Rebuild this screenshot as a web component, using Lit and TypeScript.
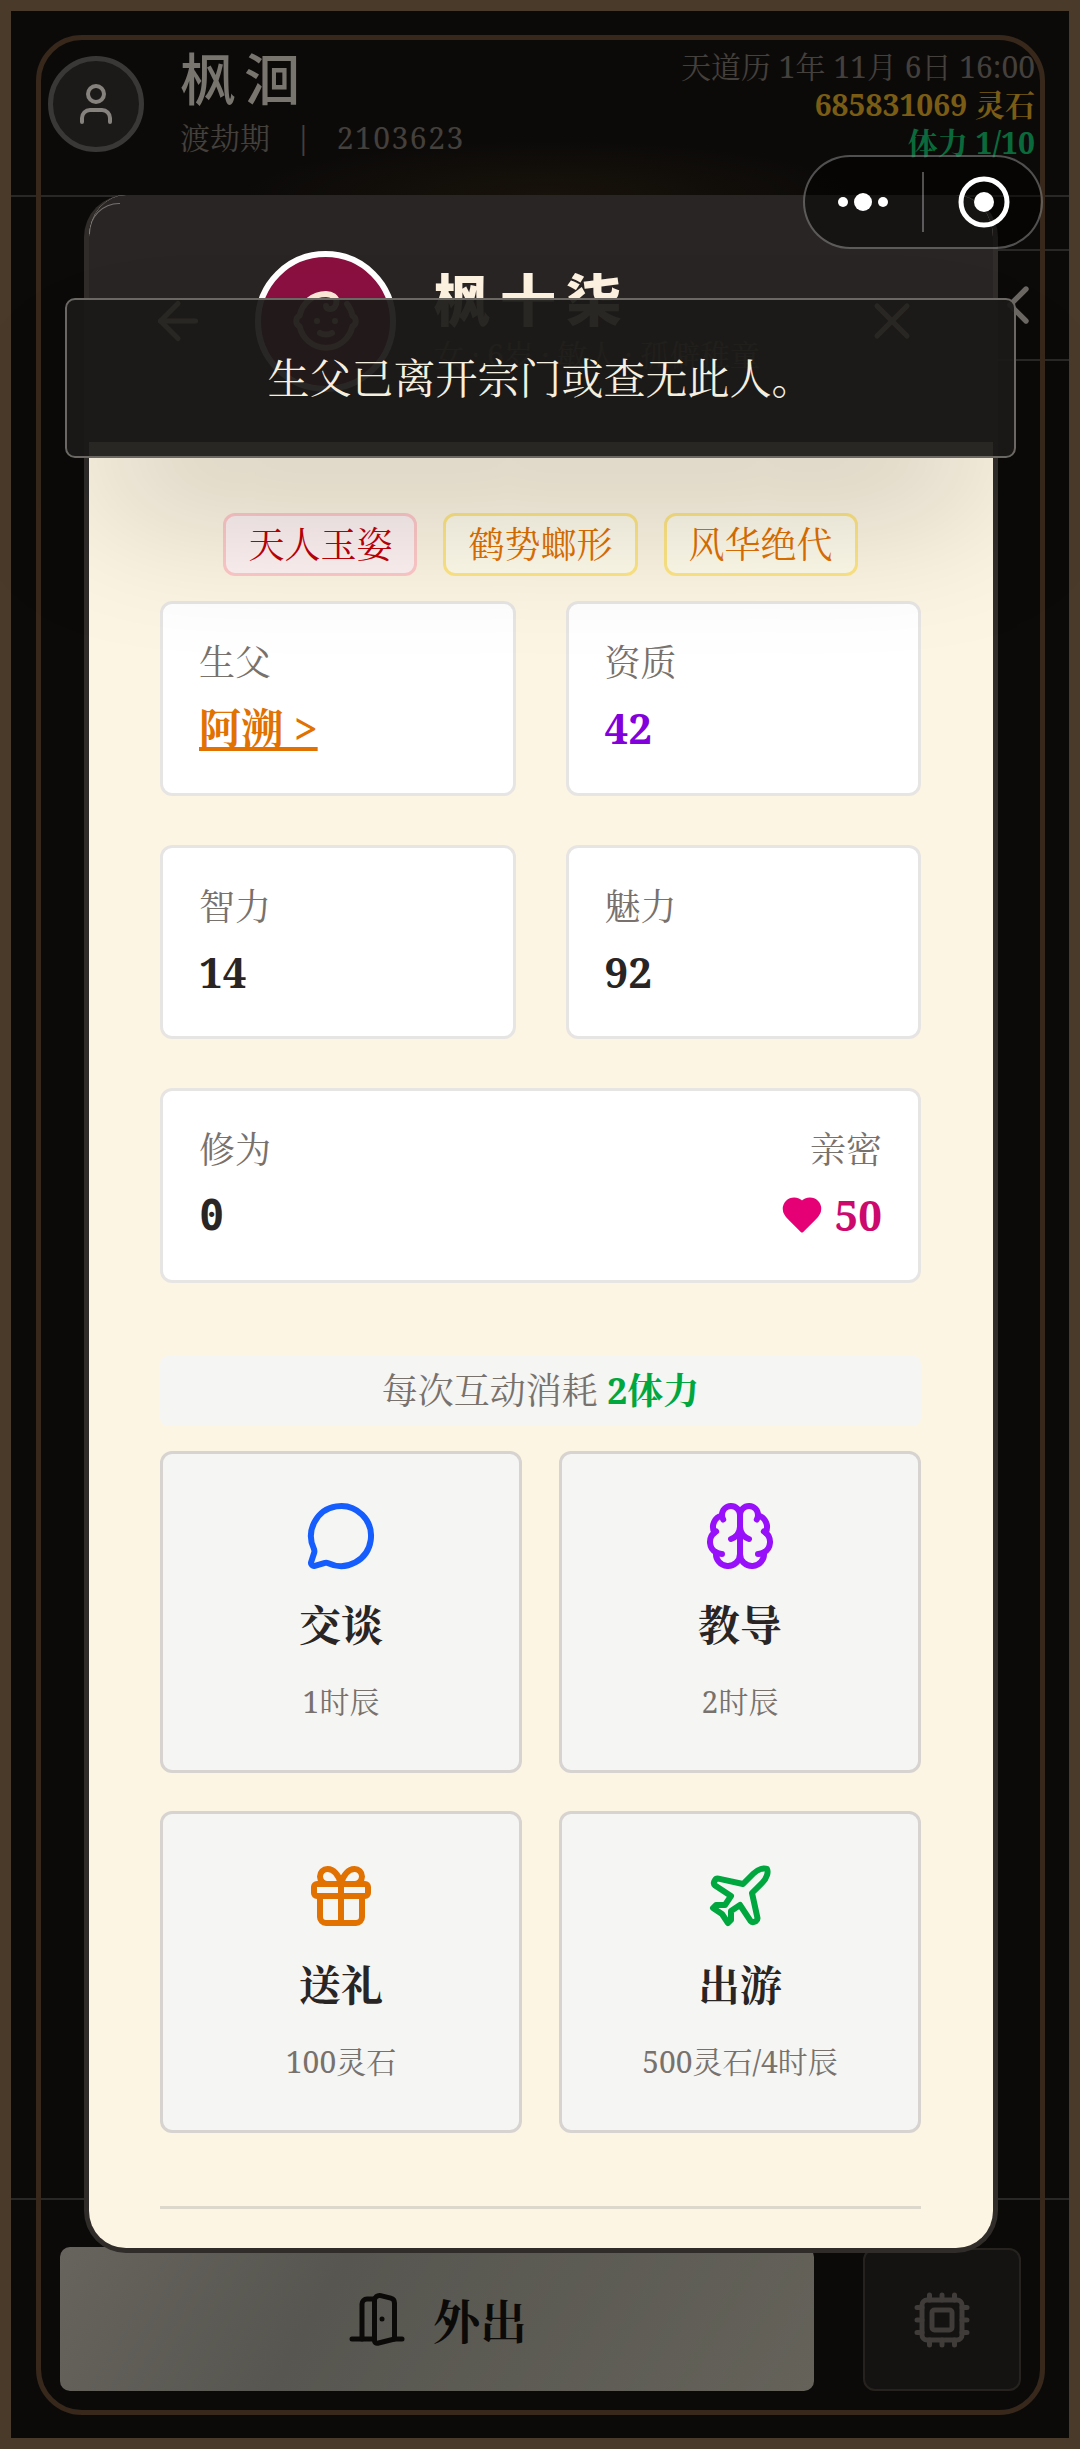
import { LitElement, html, css, svg } from 'lit';
import { customElement } from 'lit/decorators.js';

const icon = (size: number, stroke: number, body: unknown) => html`
  <svg class="ic" width=${size} height=${size} viewBox="0 0 24 24" fill="none" stroke="currentColor"
    stroke-width=${stroke} stroke-linecap="round" stroke-linejoin="round">${body}</svg>
`;

const USER = svg`<path d="M19 21v-2a4 4 0 0 0-4-4H9a4 4 0 0 0-4 4v2"/><circle cx="12" cy="7" r="4"/>`;
const ARROW = svg`<path d="m12 19-7-7 7-7"/><path d="M19 12H5"/>`;
const CLOSE = svg`<path d="M18 6 6 18"/><path d="m6 6 12 12"/>`;
const CHEVRON = svg`<path d="m15 18-6-6 6-6"/>`;
const BABY = svg`<path d="M9 12h.01"/><path d="M15 12h.01"/><path d="M10 16c.5.3 1.2.5 2 .5s1.5-.2 2-.5"/><path d="M19 6.3a9 9 0 0 1 1.8 3.9 2 2 0 0 1 0 3.6 9 9 0 0 1-17.6 0 2 2 0 0 1 0-3.6A9 9 0 0 1 12 3c2 0 3.5 1.1 3.5 2.5s-.9 2.5-2 2.5c-.8 0-1.5-.4-1.5-1"/>`;
const HEART = svg`<path fill="currentColor" d="M19 14c1.49-1.46 3-3.21 3-5.5A5.5 5.5 0 0 0 16.5 3c-1.76 0-3 .5-4.5 2-1.5-1.5-2.74-2-4.5-2A5.5 5.5 0 0 0 2 8.5c0 2.3 1.5 4.05 3 5.5l7 7Z"/>`;
const CHAT = svg`<path d="M2.992 16.342a2 2 0 0 1 .094 1.167l-1.065 3.29a1 1 0 0 0 1.236 1.168l3.413-.998a2 2 0 0 1 1.099.092 10 10 0 1 0-4.777-4.719"/>`;
const BRAIN = svg`<path d="M12 5a3 3 0 1 0-5.997.125 4 4 0 0 0-2.526 5.77 4 4 0 0 0 .556 6.588A4 4 0 1 0 12 18Z"/><path d="M12 5a3 3 0 1 1 5.997.125 4 4 0 0 1 2.526 5.77 4 4 0 0 1-.556 6.588A4 4 0 1 1 12 18Z"/><path d="M15 13a4.5 4.5 0 0 1-3-4 4.5 4.5 0 0 1-3 4"/><path d="M17.599 6.5a3 3 0 0 0 .399-1.375"/><path d="M6.003 5.125A3 3 0 0 0 6.401 6.5"/><path d="M3.477 10.896a4 4 0 0 1 .585-.396"/><path d="M19.938 10.5a4 4 0 0 1 .585.396"/><path d="M6 18a4 4 0 0 1-1.967-.516"/><path d="M19.967 17.484A4 4 0 0 1 18 18"/>`;
const GIFT = svg`<rect x="3" y="8" width="18" height="4" rx="1"/><path d="M12 8v13"/><path d="M19 12v7a2 2 0 0 1-2 2H7a2 2 0 0 1-2-2v-7"/><path d="M7.5 8a2.5 2.5 0 0 1 0-5A4.8 8 0 0 1 12 8a4.8 8 0 0 1 4.5-5 2.5 2.5 0 0 1 0 5"/>`;
const PLANE = svg`<path d="M17.8 19.2 16 11l3.5-3.5C21 6 21.5 4 21 3c-1-.5-3 0-4.5 1.5L13 8 4.8 6.2c-.5-.1-.9.1-1.1.5l-.3.5c-.2.5-.1 1 .3 1.3L9 12l-2 3H4l-1 1 3 2 2 3 1-1v-3l3-2 3.5 5.3c.3.4.8.5 1.3.3l.5-.2c.4-.3.6-.7.5-1.2z"/>`;
const DOOR = svg`<path d="M11 20H2"/><path d="M11 4.562v16.157a1 1 0 0 0 1.242.97L19 20V5.562a2 2 0 0 0-1.515-1.94l-4-1A2 2 0 0 0 11 4.561z"/><path d="M11 4H8a2 2 0 0 0-2 2v14"/><path d="M14 12h.01"/><path d="M22 20h-3"/>`;
const CPU = svg`<rect x="4" y="4" width="16" height="16" rx="2"/><rect x="8" y="8" width="8" height="8" rx="1"/><path d="M12 20v2M12 2v2M17 20v2M17 2v2M2 12h2M2 17h2M2 7h2M20 12h2M20 17h2M20 7h2M7 20v2M7 2v2"/>`;

interface Action { name: string; cost: string; color: string; icon: unknown; }

const ACTIONS: Action[] = [
  { name: '交谈', cost: '1时辰', color: '#155dfc', icon: CHAT },
  { name: '教导', cost: '2时辰', color: '#9810fa', icon: BRAIN },
  { name: '送礼', cost: '100灵石', color: '#e17100', icon: GIFT },
  { name: '出游', cost: '500灵石/4时辰', color: '#00a63e', icon: PLANE },
];

@customElement('app-root')
export class AppRoot extends LitElement {
  static styles = css`
    :host {
      display: block;
      position: relative;
      width: 1080px;
      height: 2449px;
      overflow: hidden;
      font-family: 'Noto Serif', 'Noto Serif CJK SC', 'Noto Sans CJK SC', serif;
      background: #0c0a09;
    }
    .ic { display: block; flex: none; }
    .page {
      box-sizing: border-box;
      height: 100%;
      border: 11px solid #4a3a2a;
      display: flex;
      flex-direction: column;
    }
    .frame {
      position: absolute;
      left: 36px;
      top: 35px;
      width: 1009px;
      height: 2380px;
      box-sizing: border-box;
      border: 5px solid #37281b;
      border-radius: 46px;
    }
    .head {
      box-sizing: border-box;
      height: 186px;
      flex: none;
      border-bottom: 2px solid #2a2826;
      padding: 37px 34px 0 37px;
      display: flex;
      align-items: flex-start;
    }
    .me {
      box-sizing: border-box;
      width: 96px;
      height: 96px;
      margin-top: 8px;
      border: 5px solid #3a3836;
      border-radius: 50%;
      background: #1c1a19;
      color: #85817c;
      display: flex;
      align-items: center;
      justify-content: center;
    }
    .who { margin-left: 36px; }
    .who-name {
      font-family: 'Noto Sans CJK SC', sans-serif;
      font-size: 56px;
      line-height: 56px;
      font-weight: 500;
      letter-spacing: 8px;
      color: #78746e;
    }
    .who-sub {
      margin-top: 16px;
      font-size: 30px;
      line-height: 36px;
      color: #44403c;
      display: flex;
      gap: 25px;
    }
    .who-sub span:last-child { letter-spacing: 1.5px; }
    .res {
      margin-left: auto;
      text-align: right;
      font-size: 30px;
      line-height: 38px;
      color: #44403c;
    }
    .res b { display: block; }
    .gold { color: #7a5c14; }
    .green { color: #0a6a3c; }
    .nav {
      flex: none;
      height: 54px;
      box-sizing: border-box;
      margin-left: 800px;
      border-bottom: 2px solid #2a2826;
    }
    .tabs {
      flex: none;
      height: 110px;
      box-sizing: border-box;
      margin-left: 800px;
      border-bottom: 2px solid #2a2826;
      padding-right: 19px;
      color: #6b6864;
      display: flex;
      align-items: center;
      justify-content: flex-end;
    }
    .main { flex: 1; }
    .foot {
      flex: none;
      box-sizing: border-box;
      height: 240px;
      border-top: 2px solid #2a2826;
      padding: 0 48px 47px 49px;
      display: flex;
      align-items: flex-end;
      gap: 49px;
    }
    .out {
      width: 755px;
      height: 144px;
      border-radius: 10px;
      background: linear-gradient(120deg, #67645d 0%, #575650 35%, #646259 100%);
      color: #0c0a09;
      font-size: 47px;
      font-weight: 700;
      display: flex;
      align-items: center;
      justify-content: center;
      gap: 26px;
    }
    .chip {
      box-sizing: border-box;
      width: 158px;
      height: 143px;
      border: 2px solid #26231f;
      border-radius: 12px;
      background: #141312;
      color: #3f3c39;
      display: flex;
      align-items: center;
      justify-content: center;
    }

    .glow {
      position: absolute;
      left: 240px;
      top: 140px;
      width: 620px;
      height: 55px;
      background: radial-gradient(ellipse at 50% 100%, rgba(120, 90, 20, 0.1), transparent 70%);
    }

    .modal {
      position: absolute;
      left: 84px;
      top: 195px;
      width: 914px;
      height: 2058px;
      box-sizing: border-box;
      border: 5px solid #2f2c2a;
      border-top: 0;
      border-radius: 42px;
      background: #fdf5e3;
      overflow: hidden;
      display: flex;
      flex-direction: column;
    }
    .m-head {
      position: relative;
      flex: none;
      height: 247px;
      box-sizing: border-box;
      background: #292524;
      color: #fef3e0;
      padding: 5px 71px 0 59px;
      display: flex;
      align-items: center;
      gap: 47px;
    }
    .m-head::before {
      content: '';
      position: absolute;
      left: 0;
      top: 8px;
      width: 30px;
      height: 30px;
      border-top: 1px solid rgba(255, 255, 255, 0.35);
      border-left: 1px solid rgba(255, 255, 255, 0.35);
      border-top-left-radius: 30px;
    }
    .face {
      box-sizing: border-box;
      flex: none;
      width: 141px;
      height: 141px;
      border: 6px solid #fff;
      border-radius: 50%;
      background: #8a1040;
      color: #fde8d8;
      display: flex;
      align-items: center;
      justify-content: center;
    }
    .m-title { flex: 1; margin-left: -9px; }
    .m-name {
      font-family: 'Noto Sans CJK SC', sans-serif;
      font-size: 56px;
      line-height: 60px;
      font-weight: 900;
      letter-spacing: 10px;
    }
    .m-sub { font-size: 30px; line-height: 40px; margin-top: 8px; color: #78716c; }
    .m-body {
      flex: 1;
      padding: 71px 72px 0 71px;
      display: flex;
      flex-direction: column;
    }
    .tags {
      display: flex;
      justify-content: center;
      gap: 26px;
      margin-bottom: 25px;
    }
    .tag {
      box-sizing: border-box;
      height: 63px;
      padding: 0 22px;
      border: 3px solid #fee685;
      border-radius: 12px;
      background: #fffbeb;
      color: #e17100;
      font-size: 36px;
      line-height: 57px;
    }
    .tag.red { border-color: #ffc9c9; background: #fef2f2; color: #c10007; }
    .stats {
      display: grid;
      grid-template-columns: 1fr 1fr;
      grid-auto-rows: 194.5px;
      gap: 49px 50px;
    }
    .stat {
      box-sizing: border-box;
      padding: 36px 36px 0;
      border: 3px solid #e7e5e4;
      border-radius: 12px;
      background: #fff;
    }
    .stat.wide {
      grid-column: span 2;
      display: flex;
      justify-content: space-between;
    }
    .stat.wide > div:last-child { text-align: right; }
    .lbl { font-size: 36px; line-height: 46px; color: #78716c; }
    .val {
      font-size: 42px;
      line-height: 50px;
      margin-top: 17px;
      font-weight: 700;
      color: #292524;
    }
    .val.link { color: #e17100; text-decoration: underline; }
    .val.purple { color: #8200db; }
    .val.mono { font-family: 'DejaVu Sans Mono', monospace; margin-top: 18px; }
    .val.love { color: #cc0a6e; display: flex; align-items: center; justify-content: flex-end; gap: 12px; }
    .love .ic { color: #e60076; }
    .cost {
      margin-top: 73px;
      height: 70px;
      border-radius: 8px;
      background: #f5f5f4;
      color: #78716c;
      font-size: 36px;
      line-height: 70px;
      text-align: center;
    }
    .cost b { color: #00a63e; }
    .acts {
      margin-top: 25px;
      display: grid;
      grid-template-columns: 1fr 1fr;
      gap: 38px 37px;
    }
    .act {
      box-sizing: border-box;
      height: 322px;
      padding-top: 46px;
      border: 3px solid #d6d3d1;
      border-radius: 12px;
      background: #f5f5f4;
      display: flex;
      flex-direction: column;
      align-items: center;
    }
    .act-name { margin-top: 25px; font-size: 42px; line-height: 56px; font-weight: 700; color: #292524; }
    .act-cost { margin-top: 29px; font-size: 30px; line-height: 40px; color: #78716c; }
    .rule { margin-top: 73px; height: 3px; background: #dcd8cc; }

    .toast {
      position: absolute;
      left: 65px;
      top: 298px;
      width: 951px;
      height: 160px;
      box-sizing: border-box;
      padding-bottom: 4px;
      border: 2px solid #6b6864;
      border-radius: 10px;
      background: rgba(28, 25, 23, 0.94);
      box-shadow: 0 75px 150px -36px rgba(0, 0, 0, 0.25);
      color: #f5efe0;
      font-size: 42px;
      display: flex;
      align-items: center;
      justify-content: center;
    }

    .capsule {
      position: absolute;
      left: 803px;
      top: 155px;
      width: 240px;
      height: 94px;
      box-sizing: border-box;
      border: 2px solid rgba(255, 255, 255, 0.3);
      border-radius: 47px;
      background: rgba(0, 0, 0, 0.45);
    }
    .capsule svg { display: block; }
  `;

  render() {
    return html`
      <div class="page">
        <div class="head">
          <div class="me">${icon(48, 2, USER)}</div>
          <div class="who">
            <div class="who-name">枫洄</div>
            <div class="who-sub"><span>渡劫期</span><span>|</span><span>2103623</span></div>
          </div>
          <div class="res">
            <span>天道历 1年 11月 6日 16:00</span>
            <b class="gold">685831069 灵石</b>
            <b class="green">体力 1/10</b>
          </div>
        </div>
        <div class="nav"></div>
        <div class="tabs">${icon(64, 2, CHEVRON)}</div>
        <div class="main"></div>
        <div class="foot">
          <div class="out">${icon(60, 2, DOOR)}<span>外出</span></div>
          <div class="chip">${icon(60, 2, CPU)}</div>
        </div>
      </div>
      <div class="frame"></div>
      <div class="glow"></div>

      <div class="modal">
        <div class="m-head">
          ${icon(60, 2, ARROW)}
          <div class="face">${icon(72, 2, BABY)}</div>
          <div class="m-title">
            <div class="m-name">枫十柒</div>
            <div class="m-sub">女 · 6岁 · 敏人 · 孤僻稚童</div>
          </div>
          ${icon(60, 2, CLOSE)}
        </div>
        <div class="m-body">
          <div class="tags">
            <span class="tag red">天人玉姿</span>
            <span class="tag">鹤势螂形</span>
            <span class="tag">风华绝代</span>
          </div>
          <div class="stats">
            <div class="stat"><div class="lbl">生父</div><div class="val link">阿溯 &gt;</div></div>
            <div class="stat"><div class="lbl">资质</div><div class="val purple">42</div></div>
            <div class="stat"><div class="lbl">智力</div><div class="val">14</div></div>
            <div class="stat"><div class="lbl">魅力</div><div class="val">92</div></div>
            <div class="stat wide">
              <div><div class="lbl">修为</div><div class="val mono">0</div></div>
              <div><div class="lbl">亲密</div><div class="val love">${icon(42, 2, HEART)}<span>50</span></div></div>
            </div>
          </div>
          <div class="cost">每次互动消耗 <b>2体力</b></div>
          <div class="acts">
            ${ACTIONS.map(a => html`
              <div class="act">
                <span style="color:${a.color}">${icon(72, 2, a.icon)}</span>
                <div class="act-name">${a.name}</div>
                <div class="act-cost">${a.cost}</div>
              </div>
            `)}
          </div>
          <div class="rule"></div>
        </div>
      </div>

      <div class="toast">生父已离开宗门或查无此人。</div>

      <div class="capsule">
        <svg width="236" height="90" viewBox="0 0 236 90">
          <circle cx="38" cy="45" r="5" fill="#fff" />
          <circle cx="58" cy="45" r="9" fill="#fff" />
          <circle cx="78" cy="45" r="5" fill="#fff" />
          <rect x="117" y="15" width="2" height="60" fill="rgba(255,255,255,0.3)" />
          <circle cx="179" cy="45" r="23" fill="none" stroke="#fff" stroke-width="5" />
          <circle cx="179" cy="45" r="10" fill="#fff" />
        </svg>
      </div>
    `;
  }
}

declare global {
  interface HTMLElementTagNameMap {
    'app-root': AppRoot;
  }
}
